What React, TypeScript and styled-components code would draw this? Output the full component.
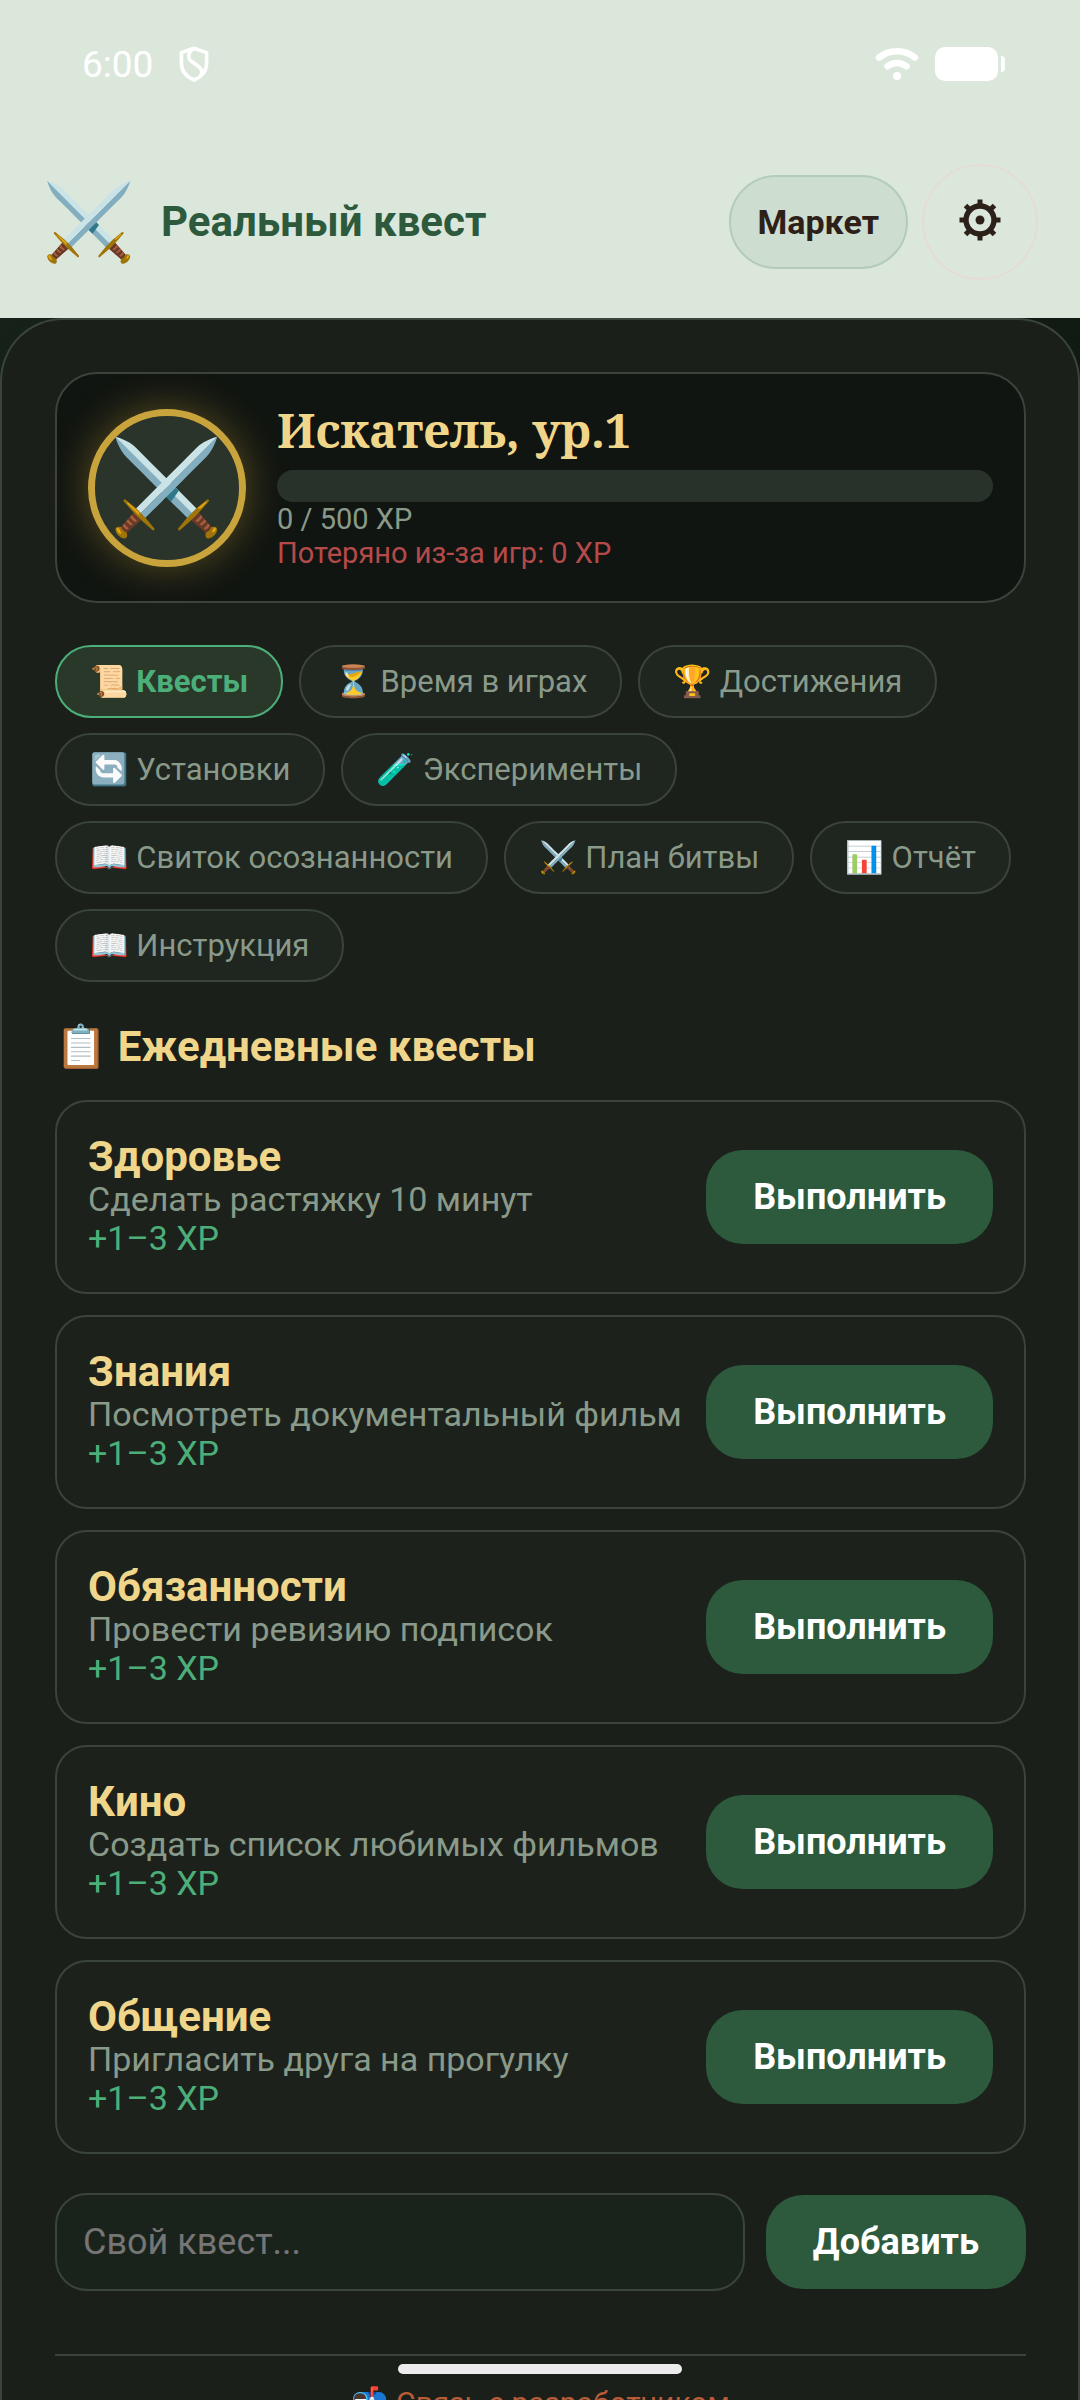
import React, { useState } from "react";
import styled, { createGlobalStyle } from "styled-components";

const GlobalStyle = createGlobalStyle`
  * {
    box-sizing: border-box;
  }
  body {
    margin: 0;
    background: #0f1711;
    font-family: Roboto, "Noto Color Emoji", sans-serif;
  }
  button,
  input {
    font-family: inherit;
    margin: 0;
  }
`;

const Shell = styled.div`
  height: 100vh;
  display: flex;
  flex-direction: column;
  background: linear-gradient(135deg, #17231a 0%, #0e1510 60%);
`;

const TopArea = styled.header`
  background: #dce7dc;
`;

const StatusBar = styled.div`
  height: 128px;
  padding: 0 75px 0 82px;
  display: flex;
  align-items: center;
  justify-content: space-between;
  color: #fff;
  font-size: 37px;
`;

const StatusGroup = styled.div<{ $gap: number }>`
  display: flex;
  align-items: center;
  gap: ${(p) => p.$gap}px;
`;

const AppBar = styled.div`
  padding: 36px 42px 38px 42px;
  display: flex;
  align-items: center;
  gap: 14px;
`;

const Logo = styled.span`
  width: 95px;
  display: flex;
  justify-content: center;
  font-size: 75px;
  line-height: 84px;
`;

const AppTitle = styled.h1`
  flex: 1;
  margin: 0 0 0 10px;
  color: #2d5a3d;
  font-size: 42px;
  line-height: 50px;
  font-weight: 700;
`;

const MarketButton = styled.button`
  height: 94px;
  padding: 0 27px;
  border: 2px solid #b3cbba;
  border-radius: 47px;
  background: #cdddd0;
  color: #2c2018;
  font-size: 34px;
  font-weight: 700;
`;

const SettingsButton = styled.button`
  width: 116px;
  height: 116px;
  padding: 0 0 4px;
  border: 2px solid #e4dcd5;
  border-radius: 50%;
  background: transparent;
  color: #2c2018;
  display: flex;
  align-items: center;
  justify-content: center;
`;

const Panel = styled.main`
  flex: 1;
  min-height: 0;
  overflow: hidden;
  padding: 52px 52px 0 53px;
  border: 2px solid #3a443b;
  border-bottom: 0;
  border-radius: 63px 63px 0 0;
  background: #1b1f1a;
`;

const Profile = styled.section`
  display: flex;
  align-items: center;
  gap: 31px;
  padding: 31px;
  border: 2px solid #3a443b;
  border-radius: 42px;
  background: #111511;
`;

const Avatar = styled.div`
  flex-shrink: 0;
  width: 158px;
  height: 158px;
  border: 7px solid #c9a43c;
  border-radius: 50%;
  background: #2a342a;
  box-shadow: 0 0 40px rgba(201, 164, 60, 0.4);
  display: flex;
  align-items: center;
  justify-content: center;
  font-size: 92px;
  line-height: 106px;
`;

const ProfileInfo = styled.div`
  flex: 1;
  color: #8a9a8a;
  font-size: 29px;
  line-height: 34px;
`;

const Rank = styled.h2`
  margin: 0 0 15px;
  color: #f0d68a;
  font-family: "Noto Serif", "DejaVu Serif", serif;
  font-size: 47px;
  line-height: 50px;
  font-weight: 700;
`;

const XpTrack = styled.div`
  height: 32px;
  border-radius: 16px;
  background: #29322a;
  overflow: hidden;
`;

const XpFill = styled.div`
  height: 100%;
  background: #4caf7a;
`;

const Lost = styled.div`
  color: #b54a4a;
`;

const Tabs = styled.nav`
  margin-top: 42px;
  display: flex;
  flex-wrap: wrap;
  gap: 15px 16px;
`;

const Tab = styled.button<{ $active: boolean }>`
  padding: 0 33px;
  border: 2px solid ${(p) => (p.$active ? "#4caf7a" : "#3a443b")};
  border-radius: 36px;
  background: ${(p) => (p.$active ? "#2a382a" : "#1f251f")};
  color: ${(p) => (p.$active ? "#4caf7a" : "#8a9a8a")};
  font-size: 31px;
  line-height: 69px;
  font-weight: ${(p) => (p.$active ? 700 : 400)};
  white-space: nowrap;
`;

const SectionTitle = styled.h2`
  margin: 40px 0 28px;
  color: #f0d68a;
  font-size: 42px;
  line-height: 50px;
  font-weight: 700;
`;

const QuestList = styled.div`
  display: flex;
  flex-direction: column;
  gap: 21px;
`;

const QuestCard = styled.article`
  display: flex;
  align-items: center;
  gap: 20px;
  padding: 31px;
  border: 2px solid #3a443b;
  border-radius: 32px;
  background: #1c221b;
`;

const QuestBody = styled.div`
  flex: 1;
  min-height: 128px;
  color: #8a9a8a;
  font-size: 34px;
  line-height: 39px;
`;

const QuestTitle = styled.h3`
  margin: 0;
  color: #f0d68a;
  font-size: 42px;
  line-height: 47px;
  font-weight: 700;
`;

const Reward = styled.div`
  color: #4caf7a;
`;

const PrimaryButton = styled.button`
  flex-shrink: 0;
  height: 94px;
  padding: 0 47px;
  border: 0;
  border-radius: 37px;
  background: #2d5a3d;
  color: #fff;
  font-size: 36px;
  font-weight: 700;
`;

const AddForm = styled.form`
  margin-top: 39px;
  display: flex;
  align-items: center;
  gap: 21px;
`;

const QuestInput = styled.input`
  flex: 1;
  min-width: 0;
  height: 98px;
  padding: 0 26px;
  border: 2px solid #3a443b;
  border-radius: 32px;
  background: #1a231b;
  color: #e8e4d8;
  font-size: 36px;
  &::placeholder {
    color: #757575;
  }
`;

const Footer = styled.footer`
  margin-top: 63px;
  padding: 27px 0 42px;
  border-top: 2px solid #3a443b;
  text-align: center;
  font-size: 30px;
  line-height: 40px;
  a {
    color: #b85c38;
    text-decoration: none;
  }
`;

const HomeIndicator = styled.div`
  position: fixed;
  left: 50%;
  bottom: 26px;
  width: 284px;
  height: 10px;
  margin-left: -142px;
  border-radius: 5px;
  background: #ececec;
`;

const ShieldIcon = () => (
  <svg width="30" height="36" viewBox="0 0 30 36" fill="none" stroke="#fff" strokeWidth="3.6" strokeLinejoin="round">
    <path d="M15 2.2 27.6 6.6V17c0 8-4.6 13.6-12.6 17C7 30.6 2.4 25 2.4 17V6.6Z" />
    <path d="M15 2.5C9 5 8.5 12 12 15L19 20C24 23.5 23.5 27 21.5 30" />
  </svg>
);

const WifiIcon = () => (
  <svg width="44" height="34" viewBox="0 0 44 34" fill="none" stroke="#fff" strokeWidth="6.5" strokeLinecap="round">
    <path d="M4 10.5C14 2 30 2 40 10.5" />
    <path d="M12.5 19.3C18 15 26 15 31.5 19.3" />
    <circle cx="22" cy="29" r="4" fill="#fff" stroke="none" />
  </svg>
);

const BatteryIcon = () => (
  <svg width="70" height="34" viewBox="0 0 70 34" fill="#fff">
    <rect width="63" height="34" rx="10" />
    <path d="M66 9c2.5 0 4 1.5 4 4v8c0 2.5-1.5 4-4 4Z" />
  </svg>
);

const GearIcon = () => (
  <svg width="42" height="42" viewBox="-21 -21 42 42" fill="currentColor">
    <circle r="14" fill="none" stroke="currentColor" strokeWidth="5.4" />
    <circle r="4.5" />
    {[0, 45, 90, 135, 180, 225, 270, 315].map((angle) => (
      <rect key={angle} x="-2.5" y="-20.5" width="5" height="5" transform={`rotate(${angle})`} />
    ))}
  </svg>
);

const tabs = [
  "📜 Квесты",
  "⏳ Время в играх",
  "🏆 Достижения",
  "🔄 Установки",
  "🧪 Эксперименты",
  "📖 Свиток осознанности",
  "⚔️ План битвы",
  "📊 Отчёт",
  "📖 Инструкция",
];

const quests = [
  { title: "Здоровье", text: "Сделать растяжку 10 минут" },
  { title: "Знания", text: "Посмотреть документальный фильм" },
  { title: "Обязанности", text: "Провести ревизию подписок" },
  { title: "Кино", text: "Создать список любимых фильмов" },
  { title: "Общение", text: "Пригласить друга на прогулку" },
];

export default function App() {
  const [activeTab, setActiveTab] = useState(0);
  const xp = 0;

  return (
    <Shell>
      <GlobalStyle />
      <TopArea>
        <StatusBar>
          <StatusGroup $gap={26}>
            <span>6:00</span>
            <ShieldIcon />
          </StatusGroup>
          <StatusGroup $gap={16}>
            <WifiIcon />
            <BatteryIcon />
          </StatusGroup>
        </StatusBar>
        <AppBar>
          <Logo>⚔️</Logo>
          <AppTitle>Реальный квест</AppTitle>
          <MarketButton type="button">Маркет</MarketButton>
          <SettingsButton type="button" aria-label="Настройки">
            <GearIcon />
          </SettingsButton>
        </AppBar>
      </TopArea>
      <Panel>
        <Profile>
          <Avatar>⚔️</Avatar>
          <ProfileInfo>
            <Rank>Искатель, ур.1</Rank>
            <XpTrack>
              <XpFill style={{ width: `${(xp / 500) * 100}%` }} />
            </XpTrack>
            <div>{xp} / 500 XP</div>
            <Lost>Потеряно из-за игр: 0 XP</Lost>
          </ProfileInfo>
        </Profile>
        <Tabs>
          {tabs.map((label, i) => (
            <Tab key={label} type="button" $active={i === activeTab} onClick={() => setActiveTab(i)}>
              {label}
            </Tab>
          ))}
        </Tabs>
        <SectionTitle>📋 Ежедневные квесты</SectionTitle>
        <QuestList>
          {quests.map((quest) => (
            <QuestCard key={quest.title}>
              <QuestBody>
                <QuestTitle>{quest.title}</QuestTitle>
                <div>{quest.text}</div>
                <Reward>+1–3 XP</Reward>
              </QuestBody>
              <PrimaryButton type="button">Выполнить</PrimaryButton>
            </QuestCard>
          ))}
        </QuestList>
        <AddForm onSubmit={(e) => e.preventDefault()}>
          <QuestInput type="text" placeholder="Свой квест..." aria-label="Свой квест" />
          <PrimaryButton type="submit">Добавить</PrimaryButton>
        </AddForm>
        <Footer>
          <a href="#contact">📬 Связь с разработчиком</a>
        </Footer>
      </Panel>
      <HomeIndicator />
    </Shell>
  );
}
